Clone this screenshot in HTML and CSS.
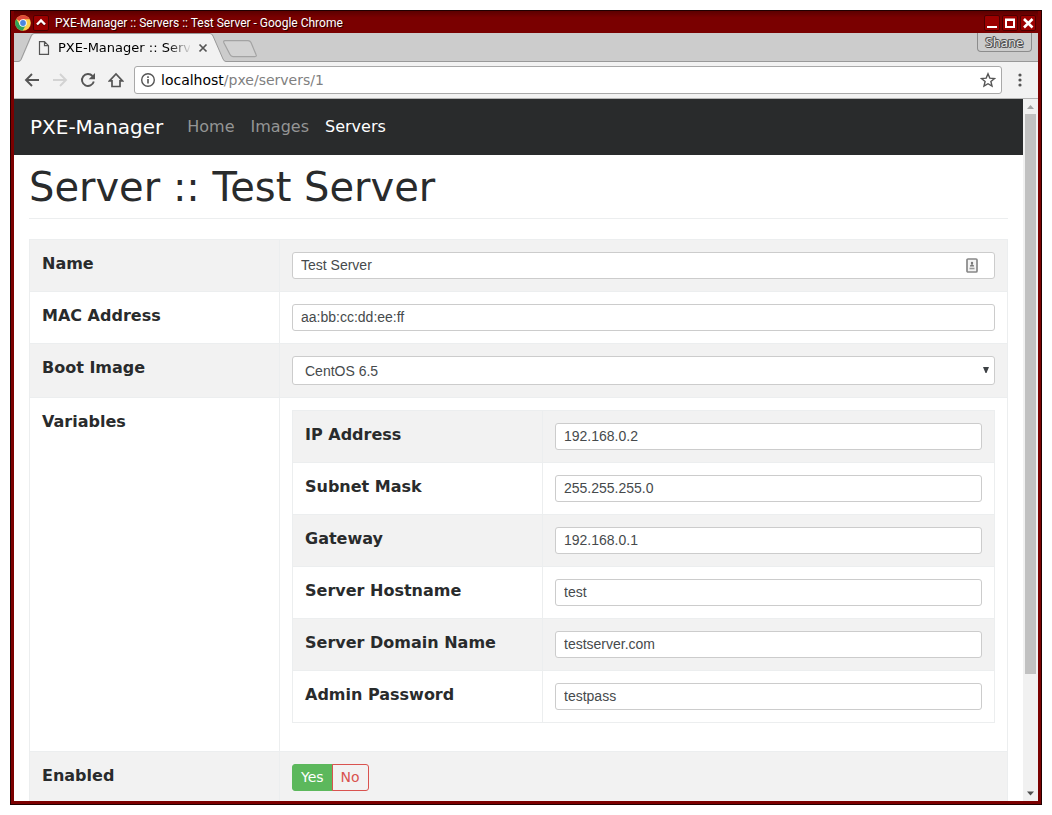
FILE: index.html
```html
<!DOCTYPE html>
<html lang="en">
<head>
<meta charset="utf-8">
<title>PXE-Manager :: Servers :: Test Server</title>
<link rel="stylesheet" href="styles.css">
</head>
<body>
<div class="window">
  <header class="titlebar">
    <svg class="chrome-logo" viewBox="0 0 16 16" width="16" height="16" aria-hidden="true">
      <circle cx="8" cy="8" r="7.8" fill="#fbd04b"/>
      <path d="M8 8 1.250 4.100A7.800 7.800 0 0 1 14.750 4.200H8Z" fill="#e0493b"/>
      <path d="M1.250 4.100A7.800 7.800 0 0 0 7.600 15.800L11 9.800 8 8 4.700 9.600Z" fill="#2fa35a"/>
      <circle cx="8" cy="8" r="3.800" fill="#fff"/>
      <circle cx="8" cy="8" r="2.900" fill="#4a86e0"/>
    </svg>
    <button class="wm-button" type="button" aria-label="Shade"><svg viewBox="0 0 14 14" width="14" height="14"><path d="M3 9.500 7 5.500l4 4" fill="none" stroke="#500" stroke-width="2.400"/><path d="M3 8.500 7 4.500l4 4" fill="none" stroke="#fff" stroke-width="2.400"/></svg></button>
    <span class="window-title">PXE-Manager :: Servers :: Test Server - Google Chrome</span>
    <button class="wm-button" type="button" aria-label="Minimize"><svg viewBox="0 0 14 14" width="14" height="14"><path d="M2 11h10" fill="none" stroke="#fff" stroke-width="2"/></svg></button>
    <button class="wm-button" type="button" aria-label="Maximize"><svg viewBox="0 0 14 14" width="14" height="14"><path d="M3 4h8v7H3zM2 3.500h10" fill="none" stroke="#fff" stroke-width="2"/></svg></button>
    <button class="wm-button" type="button" aria-label="Close"><svg viewBox="0 0 14 14" width="14" height="14"><path d="m3 3 8.500 8.500M11.500 3 3 11.500" fill="none" stroke="#fff" stroke-width="2.600"/></svg></button>
  </header>

  <div class="tabstrip">
    <div class="tab">
      <svg class="tab-shape" viewBox="0 0 212 29" width="212" height="29" aria-hidden="true">
        <path d="M0 29V28.500H5Q7 28.500 8 26L18 3Q19 .5 21 .5H196Q198 .5 199 3L209 26Q210 28.500 212 28.500V29Z" fill="#f2f2f2"/>
        <path d="M0 28.500H4Q6 28.500 7 26.500L17 3Q18 .5 20 .5H196Q198 .5 199 3L209 26Q210 28.500 212 28.500" fill="none" stroke="#999"/>
      </svg>
      <svg class="page-icon" viewBox="0 0 12 14" width="12" height="14" aria-hidden="true"><path d="M1.500.7h5l4 4v8.600h-9zM6.500.7v4h4" fill="none" stroke="#555" stroke-width="1.200"/></svg>
      <span class="tab-title">PXE-Manager :: Serv</span>
      <button class="tab-close" type="button" aria-label="Close tab"><svg viewBox="0 0 10 10" width="10" height="10"><path d="m1.500 1.500 7 7M8.500 1.500l-7 7" fill="none" stroke="#555" stroke-width="1.700"/></svg></button>
    </div>
    <button class="new-tab" type="button" aria-label="New tab"><svg viewBox="0 0 36 18" width="36" height="18"><path d="M3 .6h23q2 0 3 2l5 12q1 2-1 2H11q-2 0-3-2L2 3Q1 .6 3 .6z" fill="#d2d2d2" stroke="#a3a3a3" stroke-width="1.200"/></svg></button>
    <button class="profile" type="button">Shane</button>
  </div>

  <div class="toolbar">
    <button class="tool" type="button" aria-label="Back"><svg viewBox="0 0 16 16" width="16" height="16"><path d="M15 8H2.500M8 2 2 8l6 6" fill="none" stroke="#555" stroke-width="1.900"/></svg></button>
    <button class="tool" type="button" aria-label="Forward" disabled><svg viewBox="0 0 16 16" width="16" height="16"><path d="M1 8h12.500M8 2l6 6-6 6" fill="none" stroke="#d3d3d3" stroke-width="1.900"/></svg></button>
    <button class="tool" type="button" aria-label="Reload"><svg viewBox="0 0 16 16" width="16" height="16"><path d="M13.800 9.500A6 6 0 1 1 12.500 4" fill="none" stroke="#555" stroke-width="1.900"/><path d="M15 1v6.300H8.700z" fill="#555"/></svg></button>
    <button class="tool" type="button" aria-label="Home"><svg viewBox="0 0 16 16" width="16" height="16"><path d="M1.500 8.800 8 2l6.500 6.800H12v5.700H4V8.800z" fill="none" stroke="#555" stroke-width="1.700"/></svg></button>
    <div class="omnibox">
      <svg viewBox="0 0 16 16" width="16" height="16" aria-hidden="true"><circle cx="8" cy="8" r="6.300" fill="none" stroke="#555" stroke-width="1.400"/><path d="M8 7v4.500M8 4.300v1.600" stroke="#555" stroke-width="1.600"/></svg>
      <span class="url"><span class="host">localhost</span>/pxe/servers/1</span>
      <button class="star" type="button" aria-label="Bookmark this page"><svg viewBox="0 0 16 16" width="16" height="16"><path d="m8 1.800 1.800 4.300 4.700.4-3.600 3 1.100 4.600L8 11.700l-4 2.400 1.100-4.600-3.600-3 4.700-.4z" fill="none" stroke="#555" stroke-width="1.400"/></svg></button>
    </div>
    <button class="menu" type="button" aria-label="Menu"><svg viewBox="0 0 4 14" width="4" height="14"><g fill="#555"><circle cx="2" cy="2" r="1.600"/><circle cx="2" cy="7" r="1.600"/><circle cx="2" cy="12" r="1.600"/></g></svg></button>
  </div>

  <div class="viewport">
    <div class="page">
      <nav class="navbar">
        <a class="brand" href="#">PXE-Manager</a>
        <a class="nav-link" href="#">Home</a>
        <a class="nav-link" href="#">Images</a>
        <a class="nav-link active" href="#" aria-current="page">Servers</a>
      </nav>
      <main class="container">
        <h1>Server :: Test Server</h1>
        <table class="table outer">
          <tr>
            <th scope="row"><label for="name">Name</label></th>
            <td><div class="field"><input class="control" id="name" type="text" value="Test Server">
              <svg class="autofill" viewBox="0 0 12 15" width="12" height="15" aria-hidden="true"><rect x="1" y="1" width="10" height="13" rx="1" fill="#f4f4f4" stroke="#888" stroke-width="1.700"/><circle cx="6" cy="5" r="1.200" fill="#777"/><path d="M4 8.500V7.500L6 6l2 1.500v1z" fill="#777"/><path d="M3.500 10.500h5" stroke="#999" stroke-width="1.600"/></svg></div></td>
          </tr>
          <tr>
            <th scope="row"><label for="mac">MAC Address</label></th>
            <td><input class="control" id="mac" type="text" value="aa:bb:cc:dd:ee:ff"></td>
          </tr>
          <tr>
            <th scope="row"><label for="image">Boot Image</label></th>
            <td><div class="field"><select class="control" id="image"><option>CentOS 6.5</option></select>
              <svg class="caret" viewBox="0 0 6 6" width="6" height="6" aria-hidden="true"><path d="M0 0h6L3.500 6h-1z" fill="#3d4145"/></svg></div></td>
          </tr>
          <tr>
            <th scope="row">Variables</th>
            <td>
              <table class="table inner">
                <tr><th scope="row"><label for="ip">IP Address</label></th><td><input class="control" id="ip" type="text" value="192.168.0.2"></td></tr>
                <tr><th scope="row"><label for="mask">Subnet Mask</label></th><td><input class="control" id="mask" type="text" value="255.255.255.0"></td></tr>
                <tr><th scope="row"><label for="gateway">Gateway</label></th><td><input class="control" id="gateway" type="text" value="192.168.0.1"></td></tr>
                <tr><th scope="row"><label for="host">Server Hostname</label></th><td><input class="control" id="host" type="text" value="test"></td></tr>
                <tr><th scope="row"><label for="domain">Server Domain Name</label></th><td><input class="control" id="domain" type="text" value="testserver.com"></td></tr>
                <tr><th scope="row"><label for="password">Admin Password</label></th><td><input class="control" id="password" type="text" value="testpass"></td></tr>
              </table>
            </td>
          </tr>
          <tr>
            <th scope="row">Enabled</th>
            <td><div class="btn-group"><button class="btn yes" type="button" aria-pressed="true">Yes</button><button class="btn no" type="button" aria-pressed="false">No</button></div></td>
          </tr>
        </table>
      </main>
    </div>
    <div class="scrollbar" aria-hidden="true">
      <svg viewBox="0 0 15 15" width="15" height="15"><path d="M4 10 7.500 6 11 10z" fill="#a3a3a3"/></svg>
      <div class="track"><div class="thumb"></div></div>
      <svg viewBox="0 0 15 15" width="15" height="15"><path d="M4 5.500 7.500 9.500 11 5.500z" fill="#505050"/></svg>
    </div>
  </div>
</div>
</body>
</html>
```

FILE: styles.css
```css
* { box-sizing: border-box; }
body {
  margin: 0;
  padding: 10px;
  height: 100vh;
  background: #fff;
  color: #292b2c;
  font: 16px/24px "DejaVu Sans", sans-serif;
  overflow: hidden;
}
button { margin: 0; padding: 0; border: 0; background: none; font: inherit; color: inherit; }
svg { display: block; flex: none; }

.window {
  display: flex;
  flex-direction: column;
  height: 100%;
  border: 1px solid #200;
  padding: 0 3px 3px;
  background: #7b0000;
}
.titlebar {
  display: flex;
  flex: none;
  align-items: center;
  gap: 2px;
  height: 22px;
  padding: 2px 2px 0 1px;
  background: linear-gradient(#5c0000, #7a0000 30%, #7a0000);
  color: #fff;
  font: 12px/18px Roboto, sans-serif;
}
.wm-button { padding: 0; border: 1px solid #4c0000; border-radius: 2px; background: #9c0000; width: 16px; height: 16px; }
.window-title { flex: 1; margin-left: 4px; white-space: nowrap; overflow: hidden; text-shadow: 1px 1px #300; }

.tabstrip {
  display: flex;
  flex: none;
  height: 29px;
  background: #ccc;
  box-shadow: inset 0 -1px #999;
}
.tab { position: relative; display: flex; align-items: center; width: 212px; padding-left: 24px; }
.tab-shape { position: absolute; inset: 0; }
.page-icon, .tab-title, .tab-close { position: relative; }
.tab-title {
  width: 132px;
  margin: 0 8px;
  white-space: nowrap;
  color: #000;
  font-size: 13px;
  -webkit-mask-image: linear-gradient(90deg, #000 110px, transparent 134px);
  mask-image: linear-gradient(90deg, #000 110px, transparent 134px);
}
.new-tab { align-self: flex-start; margin: 7px 0 0 -4px; }
.profile {
  align-self: flex-start;
  width: 55px;
  height: 19px;
  margin: 0 6px 0 auto;
  border: 1px solid #8c8c8c;
  border-top: 0;
  border-radius: 0 0 4px 4px;
  color: #e4e4e4;
  font: 13px/18px "Noto Sans", sans-serif;
  text-shadow: 1px 0 #555, -1px 0 #555, 0 1px #555, 0 -1px #555, 1px 1px #555, -1px -1px #555;
}

.toolbar {
  display: flex;
  flex: none;
  align-items: center;
  gap: 12px;
  height: 37px;
  padding: 0 16px 1px 10px;
  background: #f2f2f2;
  border-bottom: 1px solid #b4b4b4;
}
.omnibox {
  display: flex;
  flex: 1;
  align-items: center;
  gap: 5px;
  height: 28px;
  margin-left: -2px;
  padding: 0 5px;
  border: 1px solid #a9a9a9;
  border-radius: 3px;
  background: #fff;
}
.url { flex: 1; color: #808080; font-size: 14px; }
.host { color: #000; }
.menu { margin-left: 4px; }

.viewport { display: flex; flex: 1; min-height: 0; background: #fff; }
.page { flex: 1; min-width: 0; overflow: hidden; }
.scrollbar { display: flex; flex-direction: column; width: 15px; background: #f1f1f1; }
.track { flex: 1; padding: 0 2px; }
.thumb { width: 11px; height: calc(100% * 5 / 6); background: #c1c1c1; }

.navbar { display: flex; align-items: center; gap: 16px; height: 56px; padding: 0 16px; background: #292b2c; }
.navbar a { text-decoration: none; color: #949595; }
.navbar .brand { margin-right: 8px; color: #fff; font-size: 20px; }
.navbar .active { color: #fff; }

.container { padding: 10px 15px 0; }
h1 { margin: 0 0 20px; padding-bottom: 9px; border-bottom: 1px solid #eceeef; font-size: 40px; font-weight: 400; line-height: 44px; }

.table { width: 100%; border-collapse: collapse; table-layout: fixed; }
.table th, .table td { padding: 12px; border: 1px solid #eceeef; text-align: left; vertical-align: top; }
.table tr:nth-child(odd) > * { background: #f2f2f2; }
.table .inner tr:nth-child(even) > * { background: #fff; }
.outer > tbody > tr > th { width: 250px; }
.inner { margin-bottom: 16px; }
.inner th { width: 250px; }
.control {
  display: block;
  width: 100%;
  height: 27px;
  padding: 0 8px 2px;
  border: 1px solid #ccc;
  border-radius: 3px;
  background: #fff;
  color: #464a4c;
  font: 14px/21px "Liberation Sans", Arial, sans-serif;
}
select.control { height: 29px; padding: 2px 12px 0; appearance: none; }
.field { position: relative; }
.autofill { position: absolute; top: 6px; right: 17px; }
.caret { position: absolute; top: 11px; right: 6px; }

.btn-group { display: flex; }
.btn { height: 27px; padding: 0 8px; border: 1px solid; font-size: 14px; line-height: 21px; }
.yes { border-color: #5cb85c; border-radius: 3px 0 0 3px; background: #5cb85c; color: #fff; }
.no { margin-left: -1px; border-color: #d9534f; border-radius: 0 3px 3px 0; color: #d9534f; }
```
